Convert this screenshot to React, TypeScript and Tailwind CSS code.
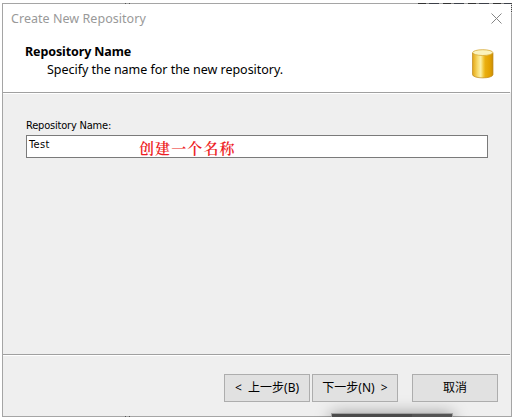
import React from "react";

function Cylinder() {
  return (
    <svg width="22" height="30" viewBox="0 0 22 30" className="block">
      <defs>
        <linearGradient id="body">
          <stop offset="0" stopColor="#dba21c" />
          <stop offset=".1" stopColor="#edbb33" />
          <stop offset=".26" stopColor="#f8dc70" />
          <stop offset=".4" stopColor="#fbf0a8" />
          <stop offset=".52" stopColor="#f3cb45" />
          <stop offset=".62" stopColor="#eaaf10" />
          <stop offset=".85" stopColor="#e2a000" />
          <stop offset="1" stopColor="#c98e08" />
        </linearGradient>
      </defs>
      <path d="M.5 4v21.500c0 4.500 20.500 4.500 20.500 0V4Z" fill="url(#body)" stroke="#c08a1c" strokeWidth=".7" />
      <ellipse cx="10.750" cy="3.600" rx="10.100" ry="2.900" fill="#fbf3bd" stroke="#d5a833" strokeWidth=".8" />
    </svg>
  );
}

function Button({ children }: { children: React.ReactNode }) {
  return (
    <button className="flex h-7 w-[86px] items-center justify-center border border-[#adadad] bg-[#e1e1e1] text-xs whitespace-pre">
      {children}
    </button>
  );
}

export default function App() {
  return (
    <div className="relative h-[417px] w-[514px] overflow-hidden bg-white pt-[3px] pl-[2px] font-['Noto_Sans','Noto_Sans_CJK_SC',sans-serif] text-black">
      <div className="flex h-[414px] w-[510px] flex-col border border-[#a5a5a5] bg-[#efefef]">
        <header className="h-[88px] bg-white">
          <div className="flex h-[30px] items-start justify-between pt-[6px] pr-[9px] pl-[8px]">
            <h1 className="text-[12.5px] leading-[18px] tracking-[0.04px] whitespace-nowrap text-[#999]">Create New Repository</h1>
            <svg width="11" height="11" className="mt-[3px]" stroke="#858585" strokeWidth="1">
              <path d="M.5.5l10 10M10.500.5l-10 10" />
            </svg>
          </div>
          <div className="flex justify-between pt-[9px] pr-[17px] pl-[22px]">
            <div className="flex flex-col text-[12.5px] leading-[18px] whitespace-nowrap">
              <h2 className="font-bold tracking-[-0.12px]">Repository Name</h2>
              <p className="pl-[22px] tracking-[-0.03px]">Specify the name for the new repository.</p>
            </div>
            <div className="pt-[6px]">
              <Cylinder />
            </div>
          </div>
        </header>
        <div className="mr-px h-[2px] border-t border-[#a0a0a0] bg-white" />
        <main className="h-[260px] pt-[22px] pl-[23px]">
          <label className="block h-[18px] font-['DejaVu_Sans_Condensed','DejaVu_Sans',sans-serif] text-[11px] leading-[19px] tracking-[-0.2px]">Repository Name:</label>
          <div className="mt-px flex h-[23px] w-[462px] border border-[#7a7a7a] bg-white pl-[2px]">
            <span className="w-[110px] font-['DejaVu_Sans_Condensed','DejaVu_Sans',sans-serif] text-[11px] leading-[18px] tracking-[0.4px]">Test</span>
            <span className="font-['Noto_Serif_CJK_SC','Noto_Sans_CJK_SC',serif] text-[15px] leading-[24px] font-semibold tracking-[1.1px] text-[#ed1c24]">创建一个名称</span>
          </div>
        </main>
        <div className="mr-px h-[2px] border-t border-[#a0a0a0] bg-white" />
        <footer className="relative z-10 flex pt-[18px] pl-[221px]">
          <Button>{"<  上一步(B)"}</Button>
          <div className="w-[2px]" />
          <Button>{"下一步(N)  >"}</Button>
          <div className="w-[14px]" />
          <Button>取消</Button>
        </footer>
      </div>
      <div className="absolute top-[413px] left-[331px] flex h-10 w-[122px] border border-[#a0a0a0] bg-[#4b4b4b] shadow-[0_0_16px_rgba(0,0,0,.35)]">
        <div className="ml-auto w-10 bg-[#555]" />
      </div>
      {/* Edge of the window underneath, showing past the dialog's top-right corner */}
      <div className="absolute top-[3px] left-[418px] h-px w-[93px] bg-[repeating-linear-gradient(90deg,#333_0_8px,#8a8a8a_8px_11px,#3c4048_11px_21px,#a5a5a5_21px_25px)]" />
      <div className="absolute top-[3px] left-[511px] h-[10px] w-px bg-[repeating-linear-gradient(#444_0_1px,#ccc_1px_2px)]" />
      <div className="absolute top-[3px] left-[125px] h-px w-[5px] border-x border-[#555]" />
      <div className="absolute top-[416px] left-[125px] h-px w-[5px] border-x border-[#555]" />
    </div>
  );
}
